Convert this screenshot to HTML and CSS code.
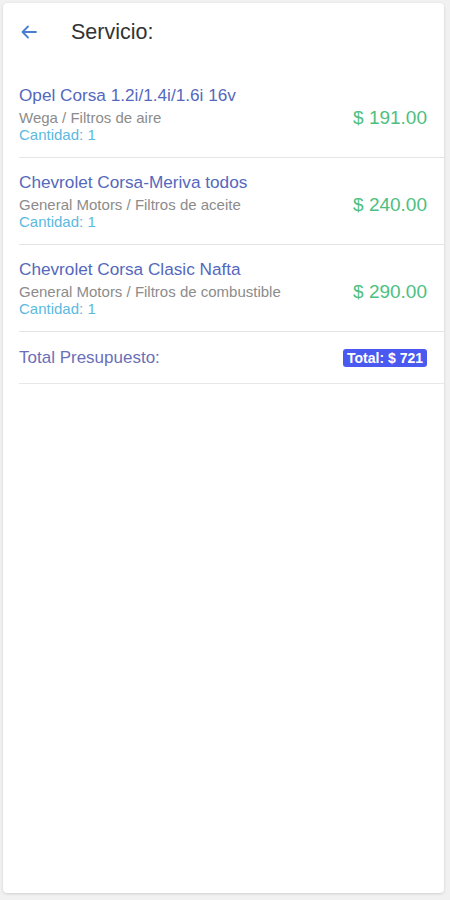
FILE: index.html
```html
<!DOCTYPE html>
<html lang="es">
<head>
<meta charset="utf-8">
<title>Servicio</title>
<link rel="stylesheet" href="styles.css">
</head>
<body>
<div class="card">
  <header class="header">
    <svg class="back" width="18" height="18" viewBox="0 0 18 18" aria-hidden="true">
      <path d="M16 9H3M8 3.5L2.5 9L8 14.5" fill="none" stroke="#4a7fd0" stroke-width="1.8" stroke-linecap="round" stroke-linejoin="round"/>
    </svg>
    <h1 class="title">Servicio:</h1>
  </header>
  <ul class="list">
    <li class="item">
      <div class="info">
        <div class="name">Opel Corsa 1.2i/1.4i/1.6i 16v</div>
        <div class="sub">Wega / Filtros de aire</div>
        <div class="qty">Cantidad: 1</div>
      </div>
      <div class="price">$ 191.00</div>
    </li>
    <li class="item">
      <div class="info">
        <div class="name">Chevrolet Corsa-Meriva todos</div>
        <div class="sub">General Motors / Filtros de aceite</div>
        <div class="qty">Cantidad: 1</div>
      </div>
      <div class="price">$ 240.00</div>
    </li>
    <li class="item">
      <div class="info">
        <div class="name">Chevrolet Corsa Clasic Nafta</div>
        <div class="sub">General Motors / Filtros de combustible</div>
        <div class="qty">Cantidad: 1</div>
      </div>
      <div class="price">$ 290.00</div>
    </li>
    <li class="total">
      <span class="total-label">Total Presupuesto:</span>
      <span class="badge">Total: $ 721</span>
    </li>
  </ul>
</div>
</body>
</html>
```
FILE: styles.css
```css
html, body {
  margin: 0;
  padding: 0;
}
body {
  background: #f1f1f1;
  font-family: "Liberation Sans", Arial, sans-serif;
  width: 450px;
  height: 900px;
  overflow: hidden;
}
.card {
  box-sizing: border-box;
  margin: 3px 6px 0 3px;
  height: 890px;
  background: #ffffff;
  border-radius: 4px;
  box-shadow: 0 1px 3px rgba(0, 0, 0, 0.12), 0 0 2px rgba(0, 0, 0, 0.06);
}
.header {
  height: 68px;
  display: flex;
  align-items: center;
  padding-left: 17px;
  box-sizing: border-box;
  padding-bottom: 10px;
}
.back {
  display: block;
}
.title {
  margin: 0 0 0 33px;
  font-weight: normal;
  font-size: 21.5px;
  color: #333333;
}
.list {
  list-style: none;
  margin: 0;
  padding: 0;
}
.item {
  display: flex;
  justify-content: space-between;
  margin-left: 16px;
  padding: 14px 17px 14px 0;
  border-bottom: 1px solid #e4e4e4;
}
.info {
  display: flex;
  flex-direction: column;
}
.name {
  font-size: 17.2px;
  line-height: 20px;
  color: #5468bd;
  margin-bottom: 4px;
}
.sub {
  font-size: 15px;
  line-height: 17px;
  color: #8c8c8c;
}
.qty {
  font-size: 15px;
  line-height: 17px;
  color: #5cb9df;
}
.price {
  align-self: center;
  margin-top: 8px;
  font-size: 19px;
  color: #4dc07f;
}
.total {
  display: flex;
  justify-content: space-between;
  align-items: center;
  margin-left: 16px;
  padding: 17px 17px 16px 0;
  border-bottom: 1px solid #e8e8e8;
}
.total-label {
  font-size: 17px;
  line-height: 18px;
  color: #6b6fb8;
}
.badge {
  background: #4a5af0;
  color: #ffffff;
  font-weight: bold;
  font-size: 14px;
  line-height: 18px;
  padding: 0 4px;
  border-radius: 3px;
}
```
